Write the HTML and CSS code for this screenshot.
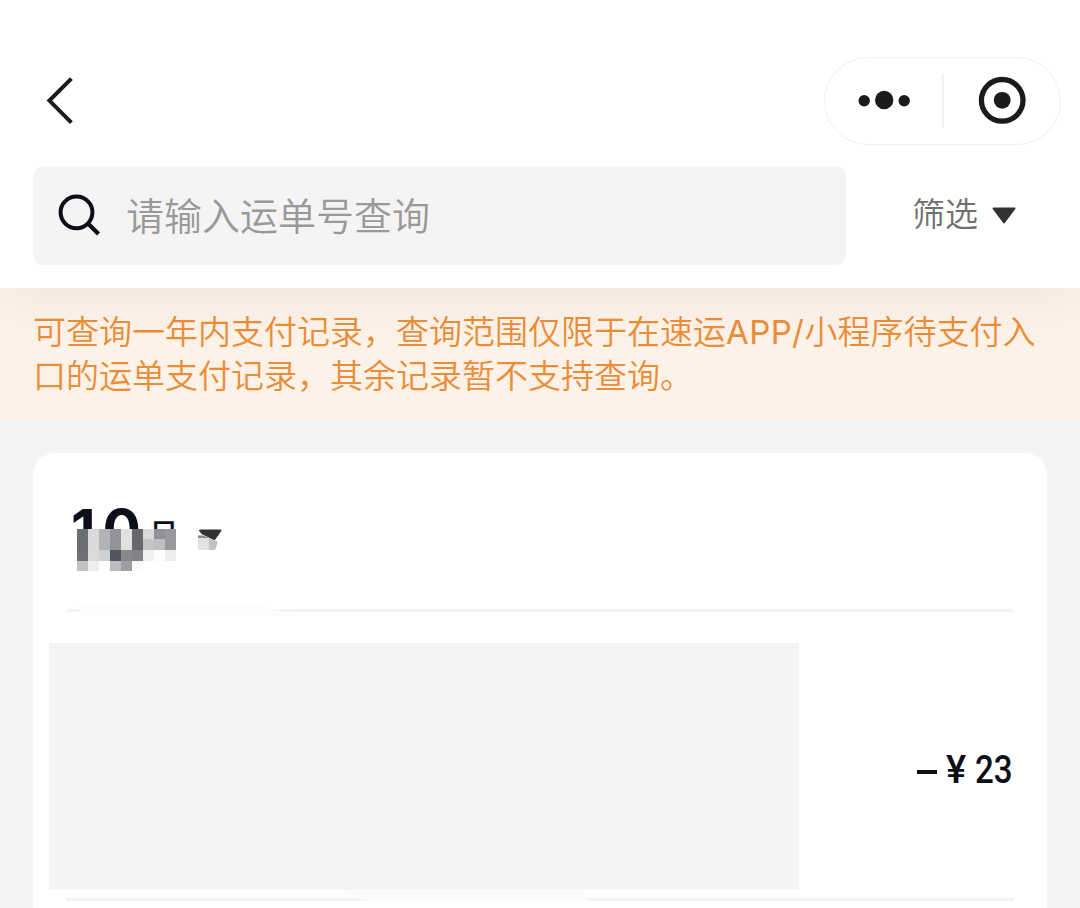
FILE: index.html
```html
<!DOCTYPE html>
<html lang="zh-CN">
<head>
    <meta charset="UTF-8">
    <meta name="viewport" content="width=device-width, initial-scale=1.0">
    <title>支付记录</title>
    <link rel="stylesheet" href="styles.css">
</head>
<body>
    <header class="header">
        <div class="nav">
            <svg class="back" width="32" height="50" viewBox="0 0 32 50">
                <path d="M27.4 2.6 L5.4 24.6 L27.4 46.6" fill="none" stroke="#1b1b1b" stroke-width="4"/>
            </svg>
            <div class="capsule">
                <svg width="235" height="86" viewBox="0 0 235 86">
                    <circle cx="39.2" cy="42.8" r="5.7" fill="#1b1b1b"/>
                    <circle cx="59.2" cy="42" r="9.2" fill="#1b1b1b"/>
                    <circle cx="79.2" cy="42.8" r="5.7" fill="#1b1b1b"/>
                    <path d="M118 16 V70" stroke="#f2f2f2" stroke-width="1.6"/>
                    <circle cx="177.2" cy="42.3" r="20.8" fill="none" stroke="#1b1b1b" stroke-width="5.3"/>
                    <circle cx="177.2" cy="42.3" r="8.4" fill="#1b1b1b"/>
                </svg>
            </div>
        </div>
        <div class="search-row">
            <div class="search">
                <svg width="44" height="44" viewBox="0 0 44 44">
                    <circle cx="19.5" cy="18.3" r="15.9" fill="none" stroke="#0c0f18" stroke-width="4"/>
                    <path d="M31 29.5 L41.5 40" stroke="#0c0f18" stroke-width="4.2"/>
                </svg>
                <span class="placeholder">请输入运单号查询</span>
            </div>
            <div class="filter">
                <span>筛选</span>
                <svg width="24" height="17" viewBox="0 0 24 17">
                    <path d="M1.5 1.5 H22.5 L12 15.5 Z" fill="#333" stroke="#333" stroke-width="2" stroke-linejoin="round"/>
                </svg>
            </div>
        </div>
    </header>

    <div class="notice">可查询一年内支付记录，查询范围仅限于在速运<span class="latin">APP/</span>小程序待支付入<br>口的运单支付记录，其余记录暂不支持查询。</div>

    <main class="card">
        <div class="month">
            <div class="month-text"><span class="num"><span>1</span><span>0</span></span><span class="unit">月</span></div>
            <svg class="arrow" width="25" height="21" viewBox="0 0 25 21">
                <path d="M2 1.5 H22.5 L16.5 10 L12 8 L4 4 Z" fill="#333" stroke="#333" stroke-width="2" stroke-linejoin="round"/>
                <path d="M0 7 L11 9 V21 H0 Z" fill="#e2e2e2"/>
                <path d="M0 6.5 H5 L11 9 H0 Z" fill="#888"/>
                <path d="M11 9 L20 13 L17 21 H11 Z" fill="#c2c2c2"/>
            </svg>
            <!-- mosaic over the lower part of the month -->
            <svg class="mosaic" width="103" height="44" viewBox="-4 0 103 44" shape-rendering="crispEdges">
                <rect x="-4" y="1" width="103" height="43" fill="#fff"/>
                <rect x="0" y="0" width="11" height="21" fill="#6b6f73"/>
                <rect x="11" y="0" width="11" height="21" fill="#d9dadc"/>
                <rect x="22" y="0" width="11" height="21" fill="#b2b3b5"/>
                <rect x="33" y="0" width="11" height="21" fill="#939497"/>
                <rect x="44" y="0" width="11" height="21" fill="#e1e1e2"/>
                <rect x="55" y="0" width="11" height="21" fill="#66686e"/>
                <rect x="66" y="0" width="11" height="10" fill="#d8d9db"/>
                <rect x="77" y="0" width="11" height="10" fill="#929397"/>
                <rect x="66" y="10" width="11" height="11" fill="#c3c4c6"/>
                <rect x="77" y="10" width="11" height="11" fill="#bdbec0"/>
                <rect x="88" y="0" width="11" height="21" fill="#98999b"/>
                <rect x="0" y="21" width="11" height="11" fill="#6f7073"/>
                <rect x="11" y="21" width="11" height="11" fill="#dadbdd"/>
                <rect x="22" y="21" width="11" height="11" fill="#cfd0d2"/>
                <rect x="33" y="21" width="11" height="11" fill="#52555b"/>
                <rect x="44" y="21" width="11" height="11" fill="#87888c"/>
                <rect x="55" y="21" width="11" height="11" fill="#808286"/>
                <rect x="66" y="21" width="11" height="11" fill="#f0f0f1"/>
                <rect x="77" y="21" width="11" height="11" fill="#fdfdfd"/>
                <rect x="88" y="21" width="11" height="11" fill="#eee"/>
                <rect x="0" y="32" width="11" height="10" fill="#c2c3c5"/>
                <rect x="11" y="32" width="11" height="10" fill="#eeeeef"/>
                <rect x="22" y="32" width="11" height="10" fill="#fdfdfd"/>
                <rect x="33" y="32" width="11" height="10" fill="#bbbcbe"/>
                <rect x="44" y="32" width="11" height="10" fill="#9d9ea2"/>
                <rect x="55" y="32" width="11" height="10" fill="#f9f9fa"/>
            </svg>
        </div>
        <svg class="line" width="948" height="12" viewBox="0 0 948 12">
            <path d="M0 4 H948 V7 H0 Z" fill="#f4f4f4"/>
            <path d="M13 0 H185 Q202 2 226 9 L238 11 H13 Z" fill="#fcfcfc"/>
        </svg>
        <div class="record">
            <div class="cover"></div>
            <div class="amount">
                <span class="minus"></span>
                <span class="price"><span class="yen">¥</span><span class="value">23</span></span>
            </div>
        </div>
        <svg class="line" width="948" height="12" viewBox="0 0 948 12">
            <path d="M0 7 H948 V10 H0 Z" fill="#f4f4f4"/>
            <path d="M265 1 H521 V11 H309 Z" fill="#fcfcfc"/>
        </svg>
    </main>
</body>
</html>
```
FILE: styles.css
```css
* {
    box-sizing: border-box;
}
body {
    margin: 0;
    height: 908px;
    overflow: hidden;
    background: #f4f4f4;
    font-family: "Noto Sans CJK SC", sans-serif;
    font-weight: 350;
}
svg {
    display: block;
    flex-shrink: 0;
}
.header {
    position: relative;
    height: 288px;
    padding-top: 57px;
    background: #fff;
    box-shadow: 0 0 60px rgba(0, 0, 0, 0.07);
}
.nav {
    display: flex;
    justify-content: space-between;
    align-items: center;
    height: 88px;
    padding: 0 19px 0 44px;
}
.capsule {
    width: 237px;
    height: 88px;
    border: 1px solid #f0f0f0;
    border-radius: 44px;
}
.search-row {
    display: flex;
    align-items: center;
    margin-top: 21px;
    padding-left: 33px;
}
.search {
    display: flex;
    align-items: center;
    gap: 25px;
    width: 813px;
    height: 99px;
    padding-left: 24px;
    border-radius: 11px;
    background: #f4f4f4;
}
.placeholder {
    margin-top: -4px;
    font-size: 38px;
    line-height: 44px;
    color: #999;
}
.filter {
    display: flex;
    align-items: center;
    gap: 14px;
    margin-left: 66px;
    font-size: 33px;
    line-height: 40px;
    color: #707070;
}
.filter span {
    margin-top: -8px;
}
.notice {
    height: 132px;
    padding: 20px 0 0 33px;
    background: #fdf2e7;
    color: #eb8d38;
    font-size: 33px;
    line-height: 44px;
    white-space: nowrap;
}
.latin {
    font-family: Inter, sans-serif;
    font-weight: 400;
    line-height: 1;
    letter-spacing: 0.4px;
}
.card {
    height: 480px;
    margin: 33px 33px 0;
    border-radius: 22px;
    background: #fff;
}
.month {
    position: relative;
    display: flex;
    height: 152px;
    padding: 42px 0 0 38px;
    color: #0c0f18;
}
.month-text {
    display: flex;
    width: 127px;
    height: 70px;
    line-height: 70px;
}
.num {
    display: flex;
    gap: 7px;
    width: 77px;
    font-family: Inter, sans-serif;
    font-size: 57px;
    font-weight: 700;
}
.unit {
    padding-top: 3px;
    font-size: 31px;
    font-weight: 500;
}
.arrow {
    margin-top: 34px;
}
.mosaic {
    position: absolute;
    left: 40px;
    top: 76px;
}
.line {
    margin-left: 33px;
}
.record {
    display: flex;
    justify-content: space-between;
    height: 274px;
    padding: 26px 34px 0 16px;
}
.cover {
    width: 750px;
    height: 247px;
    background: #f4f4f4;
}
.amount {
    display: flex;
    align-items: center;
    gap: 9px;
    padding-top: 5px;
    color: #0c0f18;
}
.minus {
    width: 20px;
    height: 4px;
    margin-top: 5px;
    background: #0c0f18;
}
.price {
    display: flex;
    gap: 9px;
    width: 67px;
    font-family: Roboto, sans-serif;
    font-size: 38px;
    font-weight: 500;
    line-height: 44px;
}
.yen {
    width: 22px;
}
.value {
    transform: scaleX(0.87);
    transform-origin: left;
}
```
